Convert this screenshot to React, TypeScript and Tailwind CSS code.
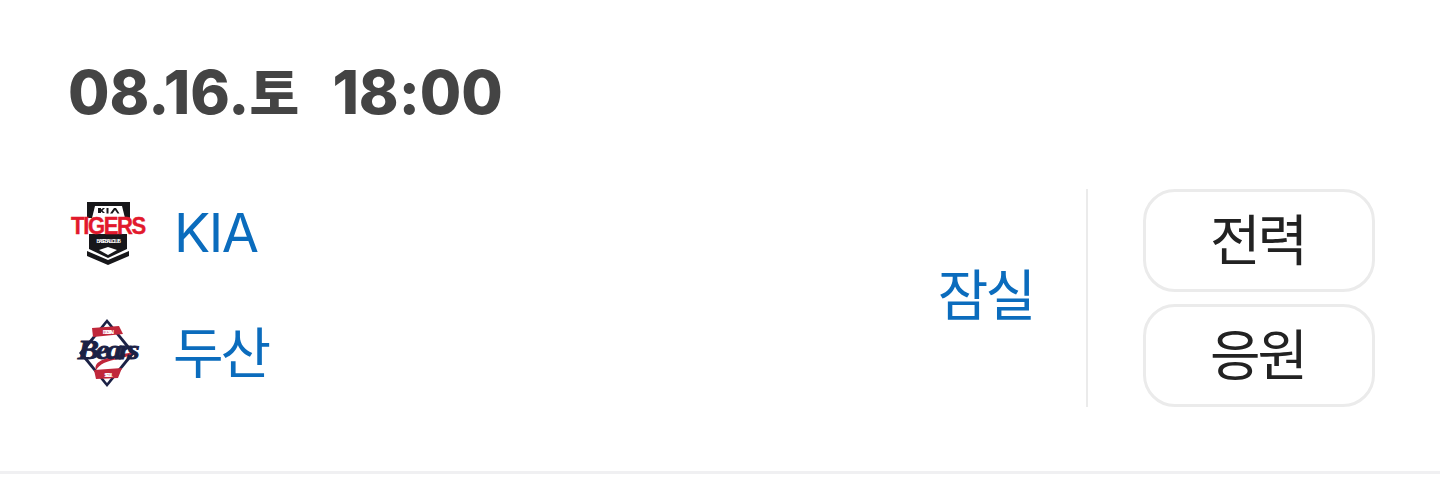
const cjk = "font-['Inter','Noto_Sans_CJK_KR',sans-serif]"

function TigersLogo() {
  return (
    <svg width="80" height="64" viewBox="0 0 80 64" className="shrink-0">
      {/* shield */}
      <path d="M19 1h43v16h-5l-3-12H27l-3 12h-5z" fill="#17171a" />
      <path d="M30 7h3v1.500l2-1.500h2l-2.500 2.500 2.500 2.500h-2l-2-1.500v1.500h-3zM38.500 7h2v5.500h-2zM42 12.500l4-5.500h2l3.500 5.500h-2l-2.500-3.500-2.500 3.500z" fill="#17171a" />
      <path d="M21 33h38v15l-19 9-19-9z" fill="#17171a" />
      <path d="M19 50l21 9 21-9v5L40 64 19 55z" fill="#17171a" />
      <path d="M31 49l9-3 9 3-9 5z" fill="#fff" />
      <text x="40" y="42" textAnchor="middle" fontSize="5" fontWeight="700" fill="#fff" fontFamily="Liberation Sans">BASEBALL CLUB</text>
      {/* wordmark */}
      <text transform="translate(40 33) scale(0.92 1)" textAnchor="middle" fontSize="24" fontWeight="700" fill="#e2192c" stroke="#e2192c" strokeWidth="0.4" fontFamily="Liberation Sans">TIGERS</text>
    </svg>
  )
}

function BearsLogo() {
  return (
    <svg width="80" height="70" viewBox="0 0 80 70" className="shrink-0">
      <path d="M39 1l28 34-28 34-28-34z" fill="#1b2145" />
      <path d="M39 5l24 30-24 30-24-30z" fill="#fff" />
      <path d="M24 10l27-2 4 8-30 3z" fill="#c0273a" />
      <path d="M26 52l28-2-4 10-22 1z" fill="#c0273a" />
      <text x="39" y="16" textAnchor="middle" fontSize="6" fontWeight="700" fill="#fff" fontFamily="Liberation Sans">DOOSAN</text>
      <text x="39" y="59" textAnchor="middle" fontSize="6" fontWeight="700" fill="#fff" fontFamily="Liberation Sans">SEOUL</text>
      <path d="M28 52c-3-9 10-13 38-18-6 7-22 7-30 11-4 2-6 4-8 7z" fill="#c0273a" />
      <text transform="translate(39 41) scale(1.18 1)" textAnchor="middle" fontSize="27" fontWeight="700" fontStyle="italic" fill="#1b2145" stroke="#1b2145" strokeWidth="0.8" fontFamily="Liberation Serif">Bears</text>
    </svg>
  )
}

function ActionButton({ label }: { label: string }) {
  return (
    <button className="flex h-[103px] w-[232px] items-center justify-center rounded-[32px] border-[3px] border-[#ebebeb] bg-white pr-[3px] text-[55px] leading-none tracking-[-3px] text-[#222222]">
      {label}
    </button>
  )
}

export default function App() {
  return (
    <div className={`h-[489px] bg-white ${cjk}`}>
      <div className="h-[474px] border-b-[3px] border-[#f0f0f2] pl-[68px] pr-[65px]">
        <h2 className="h-[189px] pt-[56px] text-[60px] font-extrabold leading-[72px] tracking-[0px] text-[#444444] whitespace-pre">
          08.16.<span className="text-[54px]">토</span>  <span className="ml-[7px]">18:00</span>
        </h2>
        <div className="flex h-[218px] items-stretch">
          <div className="flex flex-1 flex-col gap-[32px]">
            <div className="flex h-[88px] items-center gap-[26px] text-[54px] leading-none tracking-[-1.5px] text-[#0b6cbd]">
              <TigersLogo />
              <span>KIA</span>
            </div>
            <div className="flex h-[88px] items-center gap-[25px] text-[55px] leading-none tracking-[-3px] text-[#0b6cbd]">
              <BearsLogo />
              <span>두산</span>
            </div>
          </div>
          <div className="flex items-center pb-[6px] pr-[53px] text-[55px] leading-none tracking-[-3px] text-[#0b6cbd]">
            잠실
          </div>
          <div className="w-[2px] bg-[#ebebeb]" />
          <div className="ml-[55px] flex flex-col gap-[12px]">
            <ActionButton label="전력" />
            <ActionButton label="응원" />
          </div>
        </div>
      </div>
    </div>
  )
}
